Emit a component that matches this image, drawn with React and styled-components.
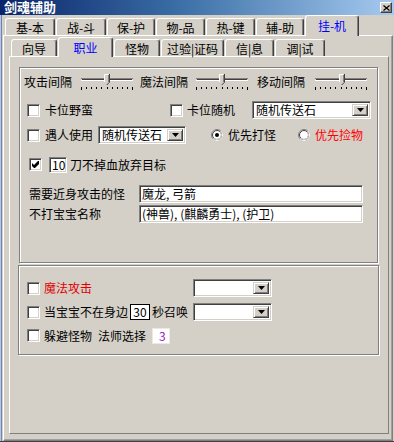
import React from 'react';
import styled, { createGlobalStyle } from 'styled-components';

const FONT = `"Noto Sans CJK SC", "Liberation Sans", sans-serif`;

const GlobalStyle = createGlobalStyle`
  html, body { margin: 0; padding: 0; background: #d4d0c8; }
  body { font-family: ${FONT}; font-size: 12px; color: #000; }
  * { box-sizing: border-box; }
`;

const Window = styled.div`
  width: 394px;
  height: 442px;
  background: #d4d0c8;
  display: flex;
  flex-direction: column;
  border-bottom: 1px solid #404040;
  box-shadow: inset 1px 0 #b8c6e0, inset 2px 0 #7084b0;
  overflow: hidden;
`;

const TitleBar = styled.div`
  flex: none;
  height: 15px;
  display: flex;
  align-items: center;
  justify-content: space-between;
  padding: 0 2px 0 4px;
  background: linear-gradient(90deg, #0a246a 0%, #3a6ea5 45%, #a6caf0 100%);
`;

const Title = styled.span`
  color: #fff;
  font-family: "Liberation Sans", "Noto Sans CJK SC", sans-serif;
  font-weight: 700;
  font-size: 13px;
  line-height: 13px;
  white-space: nowrap;
`;

const CloseBtn = styled.span`
  width: 12px;
  height: 11px;
  background: #d4d0c8;
  border: 1px solid;
  border-color: #fff #404040 #404040 #fff;
  box-shadow: inset -1px -1px #808080;
  display: flex;
  align-items: center;
  justify-content: center;
`;

const Body = styled.div`
  flex: 1;
  display: flex;
  flex-direction: column;
`;

const TabStrip = styled.div`
  flex: none;
  height: 20px;
  display: flex;
  align-items: flex-end;
  gap: 1px;
  padding-left: ${p => p.$pl}px;
  position: relative;
  z-index: 2;
`;

const Tab = styled.div`
  flex: none;
  width: ${p => p.$w}px;
  height: ${p => (p.$active ? p.$ah : 17)}px;
  margin-bottom: ${p => (p.$active ? -1 : 0)}px;
  background: #d4d0c8;
  border: 1px solid;
  border-bottom: none;
  border-color: #fff #404040 transparent #fff;
  box-shadow: inset -1px 0 #808080;
  border-radius: 3px 3px 0 0;
  color: ${p => (p.$active ? '#0000ff' : '#000')};
  display: flex;
  align-items: center;
  justify-content: center;
  padding-top: ${p => (p.$active ? 0 : 2)}px;
  font-size: 12px;
  line-height: 14px;
  white-space: nowrap;
`;

const Panel = styled.div`
  flex: none;
  width: ${p => p.$w}px;
  height: ${p => p.$h}px;
  margin-left: ${p => p.$ml}px;
  border: 1px solid;
  border-color: #fff #808080 #808080 #fff;
  box-shadow: ${p => (p.$outer ? 'inset -1px -1px #a0a0a0' : 'none')};
  display: flex;
  flex-direction: column;
  position: relative;
  z-index: 1;
`;

const Group = styled.div`
  flex: none;
  width: ${p => p.$w}px;
  height: ${p => p.$h}px;
  margin: ${p => p.$mt}px 0 0 ${p => p.$ml}px;
  border: 1px solid #808080;
  box-shadow: inset 1px 1px #fff, 1px 1px #fff;
  display: flex;
  flex-direction: column;
  padding-top: ${p => p.$pt}px;
`;

const Row = styled.div`
  flex: none;
  display: flex;
  align-items: center;
  height: ${p => p.$h || 18}px;
  margin-top: ${p => p.$mt || 0}px;
`;

const Text = styled.span`
  flex: none;
  white-space: nowrap;
  margin-left: ${p => p.$ml || 0}px;
  color: ${p => p.$color || '#000'};
  ${p => (p.$w ? `width: ${p.$w}px;` : '')}
  font-size: 12px;
  line-height: 14px;
`;

const CheckBox = styled.span`
  flex: none;
  width: 13px;
  height: 13px;
  margin-left: ${p => p.$ml || 0}px;
  background: #fff;
  border: 1px solid;
  border-color: #808080 #fff #fff #808080;
  box-shadow: inset 1px 1px #404040, inset -1px -1px #d4d0c8;
  display: flex;
  align-items: center;
  justify-content: center;
`;

const RadioBox = styled.span`
  flex: none;
  width: 12px;
  height: 12px;
  margin-left: ${p => p.$ml || 0}px;
  display: flex;
`;

const Combo = styled.div`
  flex: none;
  width: ${p => p.$w}px;
  height: ${p => p.$h || 18}px;
  margin-left: ${p => p.$ml || 0}px;
  background: #fff;
  border: 1px solid;
  border-color: #808080 #fff #fff #808080;
  box-shadow: inset 1px 1px #404040, inset -1px -1px #d4d0c8;
  display: flex;
  align-items: stretch;
  padding: 1px 1px 1px 3px;
`;

const ComboText = styled.span`
  flex: 1;
  display: flex;
  align-items: center;
  white-space: nowrap;
  font-size: 12px;
  line-height: 14px;
`;

const ComboBtn = styled.span`
  flex: none;
  width: 16px;
  margin: 1px 1px 1px 0;
  background: #d4d0c8;
  border: 1px solid;
  border-color: #d4d0c8 #404040 #404040 #d4d0c8;
  box-shadow: inset 1px 1px #fff, inset -1px -1px #808080;
  display: flex;
  align-items: center;
  justify-content: center;
`;

const Edit = styled.div`
  flex: none;
  width: ${p => p.$w}px;
  height: ${p => p.$h || 18}px;
  margin-left: ${p => p.$ml || 0}px;
  background: #fff;
  display: flex;
  align-items: center;
  white-space: nowrap;
  font-size: 12px;
  line-height: 14px;
  color: ${p => p.$color || '#000'};
  justify-content: ${p => (p.$center ? 'center' : 'flex-start')};
  ${p =>
    p.$variant === 'flat'
      ? 'border: 1px solid #000; padding: 0 1px;'
      : p.$variant === 'plain'
      ? 'border: 1px solid #ece9e4; padding: 0 0 0 6px;'
      : `border: 1px solid; border-color: #808080 #fff #fff #808080;
         box-shadow: inset 1px 1px #404040, inset -1px -1px #d4d0c8; padding: 0 1px 0 2px;`}
`;

const SliderBox = styled.span`
  flex: none;
  width: 54px;
  height: 20px;
  margin-left: ${p => p.$ml || 0}px;
  display: flex;
`;

function Trackbar({ pos = 24, ml }) {
  const ticks = [];
  for (let i = 0; i < 11; i++) {
    const x = Math.round(1 + i * 5.1) + 0.5;
    ticks.push(<line key={i} x1={x} y1="15" x2={x} y2={i === 0 || i === 10 ? 18 : 17} stroke="#000" />);
  }
  return (
    <SliderBox $ml={ml}>
      <svg width="54" height="20" viewBox="0 0 54 20">
        <line x1="1" y1="6.5" x2="53" y2="6.5" stroke="#808080" />
        <line x1="2" y1="7.5" x2="52" y2="7.5" stroke="#404040" />
        <line x1="1" y1="8.5" x2="53" y2="8.5" stroke="#fff" />
        <polygon points={`${pos},2 ${pos + 5},2 ${pos + 5},10 ${pos + 2.5},12.5 ${pos},10`} fill="#d4d0c8" />
        <polyline points={`${pos + 0.5},10 ${pos + 0.5},2.5 ${pos + 4.5},2.5`} fill="none" stroke="#fff" />
        <polyline points={`${pos + 5.5},2 ${pos + 5.5},10.2 ${pos + 2.7},13`} fill="none" stroke="#404040" />
        <line x1={pos + 4.5} y1="3" x2={pos + 4.5} y2="10" stroke="#808080" />
        {ticks}
      </svg>
    </SliderBox>
  );
}

function Check({ checked, ml }) {
  return (
    <CheckBox $ml={ml}>
      {checked && (
        <svg width="7" height="7" viewBox="0 0 7 7">
          <polygon points="0,2 2,4 6,0 7,0 7,3 3,7 2,7 0,5" fill="#000" />
        </svg>
      )}
    </CheckBox>
  );
}

function Radio({ checked, ml }) {
  return (
    <RadioBox $ml={ml}>
      <svg width="12" height="12" viewBox="0 0 12 12">
        <circle cx="6" cy="6" r="5.5" fill="#fff" stroke="#808080" />
        <path d="M2.1 9.9 A5.5 5.5 0 0 0 9.9 2.1" fill="none" stroke="#fff" />
        <circle cx="6" cy="6" r="4.5" fill="none" stroke="#404040" />
        <path d="M2.8 9.2 A4.5 4.5 0 0 0 9.2 2.8" fill="none" stroke="#d4d0c8" />
        {checked && <circle cx="6" cy="6" r="2" fill="#000" />}
      </svg>
    </RadioBox>
  );
}

function Dropdown({ w, ml, h, children }) {
  return (
    <Combo $w={w} $ml={ml} $h={h}>
      <ComboText>{children}</ComboText>
      <ComboBtn>
        <svg width="7" height="4" viewBox="0 0 7 4">
          <polygon points="0,0 7,0 3.5,4" fill="#000" />
        </svg>
      </ComboBtn>
    </Combo>
  );
}

const topTabs = [
  ['基-本', 50], ['战-斗', 50], ['保-护', 48], ['物-品', 49], ['热-键', 49], ['辅-助', 48], ['挂-机', 54, true],
];
const subTabs = [
  ['向导', 46], ['职业', 55, true], ['怪物', 46], ['过验|证码', 63], ['信|息', 49], ['调|试', 50],
];

export default function App() {
  return (
    <>
      <GlobalStyle />
      <Window>
        <TitleBar>
          <Title>剑魂辅助</Title>
          <CloseBtn>
            <svg width="7" height="6" viewBox="0 0 7 6">
              <path d="M0.5 0.5 L6.5 5.5 M6.5 0.5 L0.5 5.5" stroke="#000" strokeWidth="1.3" />
            </svg>
          </CloseBtn>
        </TitleBar>
        <Body>
          <TabStrip $pl={5}>
            {topTabs.map(([t, w, a]) => (
              <Tab key={t} $w={w} $active={a} $ah={21}>{t}</Tab>
            ))}
          </TabStrip>
          <Panel $outer $w={390} $h={406} $ml={3}>
            <TabStrip $pl={7}>
              {subTabs.map(([t, w, a]) => (
                <Tab key={t} $w={w} $active={a} $ah={20}>{t}</Tab>
              ))}
            </TabStrip>
            <Panel $w={380} $h={378} $ml={5}>
              <Group $w={359} $h={196} $mt={10} $ml={9} $pt={4}>
                <Row $h={20}>
                  <Text $ml={4} $w={48}>攻击间隔</Text>
                  <Trackbar ml={8} pos={24} />
                  <Text $ml={6} $w={48}>魔法间隔</Text>
                  <Trackbar ml={7} pos={24} />
                  <Text $ml={8} $w={48}>移动间隔</Text>
                  <Trackbar ml={9} pos={25} />
                </Row>
                <Row $mt={9}>
                  <Check ml={7} />
                  <Text $ml={5} $w={48}>卡位野蛮</Text>
                  <Check ml={77} />
                  <Text $ml={4} $w={48}>卡位随机</Text>
                  <Dropdown w={119} ml={17}>随机传送石</Dropdown>
                </Row>
                <Row $mt={7}>
                  <Check ml={7} />
                  <Text $ml={5} $w={48}>遇人使用</Text>
                  <Dropdown w={88} ml={5}>随机传送石</Dropdown>
                  <Radio ml={25} checked />
                  <Text $ml={5} $w={48}>优先打怪</Text>
                  <Radio ml={22} />
                  <Text $ml={5} $w={48} $color="#ff0000">优先捡物</Text>
                </Row>
                <Row $mt={12} $h={17}>
                  <Check ml={9} checked />
                  <Edit $w={18} $h={16} $ml={7}>10</Edit>
                  <Text $ml={3}>刀不掉血放弃目标</Text>
                </Row>
                <Row $mt={12}>
                  <Text $ml={9} $w={110}>需要近身攻击的怪</Text>
                  <Edit $w={224}>魔龙, 弓箭</Edit>
                </Row>
                <Row $mt={2}>
                  <Text $ml={9} $w={110}>不打宝宝名称</Text>
                  <Edit $w={224}>(神兽), (麒麟勇士), (护卫)</Edit>
                </Row>
              </Group>
              <Group $w={361} $h={90} $mt={2} $ml={8} $pt={13}>
                <Row>
                  <Check ml={8} />
                  <Text $ml={4} $w={48} $color="#e00000">魔法攻击</Text>
                  <Dropdown w={79} ml={101} />
                </Row>
                <Row $mt={6}>
                  <Check ml={8} />
                  <Text $ml={4} $w={84}>当宝宝不在身边</Text>
                  <Edit $variant="flat" $center $w={20} $h={16} $ml={2}>30</Edit>
                  <Text $ml={2} $w={36}>秒召唤</Text>
                  <Dropdown w={79} ml={5} />
                </Row>
                <Row $mt={6} $h={17}>
                  <Check ml={8} />
                  <Text $ml={4} $w={48}>躲避怪物</Text>
                  <Text $ml={6} $w={48}>法师选择</Text>
                  <Edit $variant="plain" $w={18} $h={16} $ml={6} $color="#a020c0">3</Edit>
                </Row>
              </Group>
            </Panel>
          </Panel>
        </Body>
      </Window>
    </>
  );
}
